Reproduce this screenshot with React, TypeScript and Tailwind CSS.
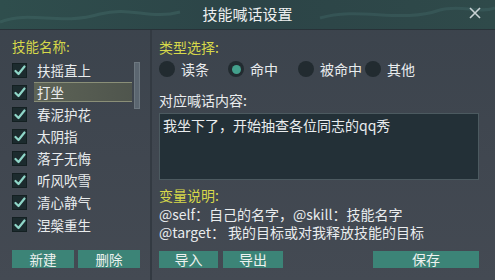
import React from "react";

const skills = ["扶摇直上", "打坐", "春泥护花", "太阴指", "落子无悔", "听风吹雪", "清心静气", "涅槃重生"];
const radios = [
  { label: "读条", on: false, w: "w-[69px]" },
  { label: "命中", on: true, w: "w-[70px]" },
  { label: "被命中", on: false, w: "w-[67px]" },
  { label: "其他", on: false, w: "w-[60px]" },
];

function Check() {
  return (
    <div className="w-[15px] h-[15px] bg-[#1c2b2e] border border-[#142022] flex items-center justify-center shrink-0">
      <svg width="12" height="11" viewBox="0 0 12 11">
        <path d="M1.5 6 L4.5 9 L10.5 1.5" stroke="#8fd6c8" strokeWidth="2.2" fill="none" strokeLinecap="round" strokeLinejoin="round" />
      </svg>
    </div>
  );
}

export default function App() {
  return (
    <div
      className="w-[495px] h-[280px] overflow-hidden flex flex-col bg-gradient-to-b from-[#3b434c] to-[#444a53] text-[#e9ecee]"
      style={{ fontFamily: '"Noto Sans CJK SC", "Noto Sans", sans-serif' }}
    >
      <div className="h-[30px] shrink-0 relative flex items-center justify-center bg-gradient-to-r from-[#2f4e4d] via-[#2c4447] to-[#2f4a4a] border-b border-[#283238]">
        <svg className="absolute left-0 top-0" width="495" height="30" viewBox="0 0 495 30">
          <path d="M0 22 C30 10 60 26 100 14 C130 6 150 20 180 12" stroke="#3d6261" strokeWidth="3" fill="none" opacity="0.6" />
          <path d="M320 18 C360 6 400 24 440 10 C460 4 480 14 495 8" stroke="#3d6261" strokeWidth="3" fill="none" opacity="0.5" />
        </svg>
        <span className="relative -mt-[2px] text-[15px] leading-none text-[#eef0f0]">技能喊话设置</span>
        <span className="absolute right-[12px] top-[5px] text-[#c9d2d4]">
          <svg width="16" height="16" viewBox="0 0 16 16">
            <path d="M3 3 L13 13 M13 3 L3 13" stroke="#c9d2d4" strokeWidth="1.6" />
          </svg>
        </span>
      </div>
      <div className="flex flex-1">
        <div className="w-[152px] shrink-0 border-r-2 border-[#333a42] flex flex-col pl-[12px] pr-[10px]">
          <div className="mt-[7px] h-[18px] text-[13.5px] leading-[18px] text-[#d6d84a]">技能名称:</div>
          <div className="flex mt-[4px]">
            <div className="flex-1 flex flex-col">
              {skills.map((s, i) => (
                <div key={s} className="h-[22.1px] flex items-center gap-[10px]">
                  <Check />
                  <div
                    className={
                      "flex-1 h-[20px] flex items-center text-[13.5px] " +
                      (i === 1 ? "bg-gradient-to-r from-[#5d6356] to-[#4f554d] border-y border-[#8a8f78] -ml-[3px] pl-[3px]" : "")
                    }
                  >
                    {s}
                  </div>
                </div>
              ))}
            </div>
            <div className="w-[6px] ml-[2px] mt-[3px] h-[47px] bg-[#5b6670] border border-[#6d7880]" />
          </div>
          <div className="mt-auto mb-[12px] flex gap-[4px]">
            <button className="w-[64px] h-[18px] bg-[#3c8477] text-[13.5px] leading-[18px] text-[#eef2f0]">新建</button>
            <button className="w-[64px] h-[18px] bg-[#3c8477] text-[13.5px] leading-[18px] text-[#eef2f0]">删除</button>
          </div>
        </div>
        <div className="flex-1 flex flex-col pl-[7px] pr-[16px]">
          <div className="mt-[8px] h-[18px] text-[14px] leading-[18px] text-[#d6d84a]">类型选择:</div>
          <div className="flex mt-[5px] h-[16px] items-center">
            {radios.map((r) => (
              <div key={r.label} className={"flex items-center gap-[6px] " + r.w}>
                <div className="w-[16px] h-[16px] rounded-full bg-[#222b30] flex items-center justify-center">
                  {r.on && <div className="w-[9px] h-[9px] rounded-full bg-[#43a08c]" />}
                </div>
                <span className="text-[14px]">{r.label}</span>
              </div>
            ))}
          </div>
          <div className="mt-[14px] h-[18px] text-[14px] leading-[18px]">对应喊话内容:</div>
          <div className="mt-[4px] h-[67px] bg-[#233037] border border-[#4c5a60] px-[3px] pt-[2px] text-[14px] leading-[18px]">
            我坐下了，开始抽查各位同志的qq秀
          </div>
          <div className="mt-[6px] h-[18px] text-[14px] leading-[18px] text-[#d6d84a]">变量说明:</div>
          <div className="text-[14px] leading-[18px] mt-[1px]">@self：自己的名字，@skill：技能名字</div>
          <div className="text-[14px] leading-[18px]">@target： 我的目标或对我释放技能的目标</div>
          <div className="mt-auto mb-[12px] flex">
            <button className="w-[59px] h-[17px] bg-[#3c8477] text-[14px] leading-[17px] text-[#eef2f0]">导入</button>
            <button className="ml-[5px] w-[60px] h-[17px] bg-[#3c8477] text-[14px] leading-[17px] text-[#eef2f0]">导出</button>
            <button className="ml-auto w-[106px] h-[17px] bg-[#3c8477] text-[14px] leading-[17px] text-[#eef2f0]">保存</button>
          </div>
        </div>
      </div>
    </div>
  );
}
